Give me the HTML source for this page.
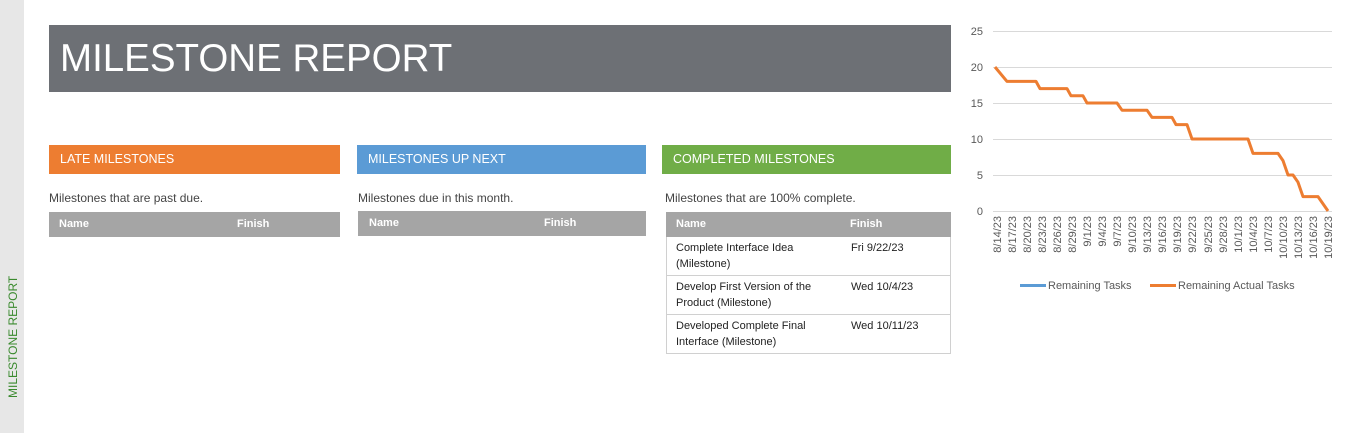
<!DOCTYPE html>
<html><head><meta charset="utf-8"><style>
body{margin:0;width:1349px;height:433px;background:#fff;position:relative;overflow:hidden;font-family:"Liberation Sans",sans-serif;}
.a{position:absolute;}
.side{left:0;top:0;width:24px;height:433px;background:#e7e7e7;}
.vt{left:13px;top:398px;transform-origin:0 0;transform:rotate(-90deg);color:#3a8a2e;font-size:12px;white-space:nowrap;line-height:0;}
.title{left:49px;top:25px;width:902px;height:67px;background:#6d7075;color:#fff;font-size:38.5px;line-height:68px;padding-left:11px;box-sizing:border-box;}
.hd{top:145px;height:29px;color:#fff;font-size:12.5px;line-height:29px;padding-left:11px;box-sizing:border-box;}
.desc{font-size:12px;color:#444;}
.th{height:25px;background:#a5a5a5;color:#fff;font-size:11px;font-weight:bold;line-height:25px;}
.cell{font-size:11px;color:#222;line-height:15.5px;}
</style></head><body>
<div class="a side"></div>
<div class="a vt">MILESTONE REPORT</div>
<div class="a title">MILESTONE REPORT</div>

<div class="a hd" style="left:49px;width:291px;background:#ed7d31">LATE MILESTONES</div>
<div class="a hd" style="left:357px;width:289px;background:#5b9bd5">MILESTONES UP NEXT</div>
<div class="a hd" style="left:662px;width:289px;background:#70ad47">COMPLETED MILESTONES</div>

<div class="a desc" style="left:49px;top:191px">Milestones that are past due.</div>
<div class="a desc" style="left:358px;top:191px">Milestones due in this month.</div>
<div class="a desc" style="left:665px;top:191px">Milestones that are 100% complete.</div>

<div class="a th" style="left:49px;top:212px;width:291px"><span class="a" style="left:10px">Name</span><span class="a" style="left:188px">Finish</span></div>
<div class="a th" style="left:358px;top:211px;width:288px"><span class="a" style="left:11px">Name</span><span class="a" style="left:186px">Finish</span></div>

<div class="a" style="left:666px;top:212px;width:285px;height:142px;border:1px solid #d0d0d0;border-top:none;box-sizing:border-box;">
 <div class="a th" style="left:-1px;top:0;width:285px"><span class="a" style="left:10px">Name</span><span class="a" style="left:184px">Finish</span></div>
 <div class="a" style="left:0;top:63px;width:283px;border-top:1px solid #d0d0d0"></div>
 <div class="a" style="left:0;top:102px;width:283px;border-top:1px solid #d0d0d0"></div>
 <div class="a cell" style="left:9px;top:29px">Complete Interface Idea<br>(Milestone)</div>
 <div class="a cell" style="left:184px;top:29px">Fri 9/22/23</div>
 <div class="a cell" style="left:9px;top:68px">Develop First Version of the<br>Product (Milestone)</div>
 <div class="a cell" style="left:184px;top:68px">Wed 10/4/23</div>
 <div class="a cell" style="left:9px;top:107px">Developed Complete Final<br>Interface (Milestone)</div>
 <div class="a cell" style="left:184px;top:107px">Wed 10/11/23</div>
</div>

<svg class="a" style="left:0;top:0" width="1349" height="433" font-family="Liberation Sans, sans-serif">
 <g stroke="#d9d9d9" stroke-width="1">
  <line x1="993" x2="1332" y1="31.5" y2="31.5"/><line x1="993" x2="1332" y1="67.5" y2="67.5"/>
  <line x1="993" x2="1332" y1="103.5" y2="103.5"/><line x1="993" x2="1332" y1="139.5" y2="139.5"/>
  <line x1="993" x2="1332" y1="175.5" y2="175.5"/><line x1="993" x2="1332" y1="211.5" y2="211.5"/>
 </g>
 <g font-size="11" fill="#595959" text-anchor="end">
  <text x="983" y="35">25</text><text x="983" y="71">20</text><text x="983" y="107">15</text>
  <text x="983" y="143">10</text><text x="983" y="179">5</text><text x="983" y="215">0</text>
 </g>
 <polyline fill="none" stroke="#ed7d31" stroke-width="3" stroke-linejoin="round" points="995,67 1007,81.4 1036,81.4 1040,88.6 1067,88.6 1071,95.8 1083,95.8 1087,103 1117,103 1122,110.2 1147,110.2 1152,117.4 1172,117.4 1176,124.6 1187,124.6 1192,139 1248,139 1253,153.4 1278,153.4 1283,160.6 1288,175 1293,175 1298,182.2 1303,196.6 1318,196.6 1328,211"/>
 <line x1="1020" x2="1046" y1="285.5" y2="285.5" stroke="#5b9bd5" stroke-width="3"/>
 <text x="1048" y="289" font-size="11" fill="#595959">Remaining Tasks</text>
 <line x1="1150" x2="1176" y1="285.5" y2="285.5" stroke="#ed7d31" stroke-width="3"/>
 <text x="1178" y="289" font-size="11" fill="#595959">Remaining Actual Tasks</text>
 <g font-size="11" fill="#595959" text-anchor="end">
  <text transform="translate(1001,216) rotate(-90)">8/14/23</text>
  <text transform="translate(1016,216) rotate(-90)">8/17/23</text>
  <text transform="translate(1031,216) rotate(-90)">8/20/23</text>
  <text transform="translate(1046,216) rotate(-90)">8/23/23</text>
  <text transform="translate(1061,216) rotate(-90)">8/26/23</text>
  <text transform="translate(1076,216) rotate(-90)">8/29/23</text>
  <text transform="translate(1091,216) rotate(-90)">9/1/23</text>
  <text transform="translate(1106,216) rotate(-90)">9/4/23</text>
  <text transform="translate(1121,216) rotate(-90)">9/7/23</text>
  <text transform="translate(1136,216) rotate(-90)">9/10/23</text>
  <text transform="translate(1151,216) rotate(-90)">9/13/23</text>
  <text transform="translate(1166,216) rotate(-90)">9/16/23</text>
  <text transform="translate(1181,216) rotate(-90)">9/19/23</text>
  <text transform="translate(1196,216) rotate(-90)">9/22/23</text>
  <text transform="translate(1212,216) rotate(-90)">9/25/23</text>
  <text transform="translate(1227,216) rotate(-90)">9/28/23</text>
  <text transform="translate(1242,216) rotate(-90)">10/1/23</text>
  <text transform="translate(1257,216) rotate(-90)">10/4/23</text>
  <text transform="translate(1272,216) rotate(-90)">10/7/23</text>
  <text transform="translate(1287,216) rotate(-90)">10/10/23</text>
  <text transform="translate(1302,216) rotate(-90)">10/13/23</text>
  <text transform="translate(1317,216) rotate(-90)">10/16/23</text>
  <text transform="translate(1332,216) rotate(-90)">10/19/23</text>
 </g>
</svg>
</body></html>
